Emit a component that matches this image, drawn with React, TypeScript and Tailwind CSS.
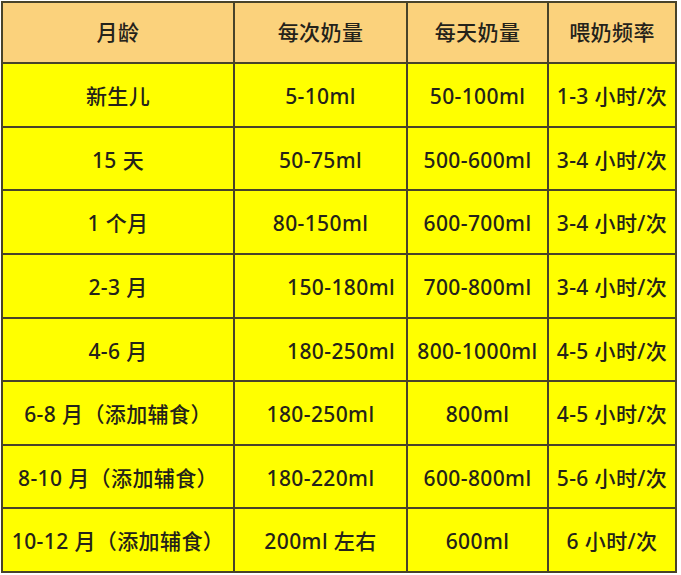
import React from "react";

const rows: { h: string; cells: [string, string, string, string]; c2?: string }[] = [
  { h: "h-[62px]", cells: ["新生儿", "5-10ml", "50-100ml", "1-3 小时/次"] },
  { h: "h-[61px]", cells: ["15 天", "50-75ml", "500-600ml", "3-4 小时/次"] },
  { h: "h-[62px]", cells: ["1 个月", "80-150ml", "600-700ml", "3-4 小时/次"] },
  { h: "h-[62px]", cells: ["2-3 月", "150-180ml", "700-800ml", "3-4 小时/次"], c2: "justify-end pr-[11px]" },
  { h: "h-[61px]", cells: ["4-6 月", "180-250ml", "800-1000ml", "4-5 小时/次"], c2: "justify-end pr-[11px]" },
  { h: "h-[62px]", cells: ["6-8 月（添加辅食）", "180-250ml", "800ml", "4-5 小时/次"] },
  { h: "h-[61px]", cells: ["8-10 月（添加辅食）", "180-220ml", "600-800ml", "5-6 小时/次"] },
  { h: "h-[62px]", cells: ["10-12 月（添加辅食）", "200ml 左右", "600ml", "6 小时/次"] },
];

export default function App() {
  const font = { fontFamily: '"Noto Sans", "Noto Sans CJK SC", sans-serif' };
  return (
    <div className="w-[681px] h-[575px] bg-white pt-[1px] pl-[1px]" style={font}>
      <div className="inline-grid grid-cols-[230px_171px_139px_126px] gap-[2px] p-[2px] bg-[#48432a] text-[21px] tracking-[0.4px] font-medium text-[#24221a] leading-none">
        {["月龄", "每次奶量", "每天奶量", "喂奶频率"].map((t) => (
          <div key={t} className="h-[59px] bg-[#fbd27c] flex items-center justify-center">
            {t}
          </div>
        ))}
        {rows.map((r, i) =>
          r.cells.map((t, j) => (
            <div
              key={i + "-" + j}
              className={
                r.h +
                " bg-[#ffff00] flex items-center pt-[3px] whitespace-nowrap " +
                (j === 1 && r.c2 ? r.c2 : "justify-center")
              }
            >
              {t}
            </div>
          ))
        )}
      </div>
    </div>
  );
}
